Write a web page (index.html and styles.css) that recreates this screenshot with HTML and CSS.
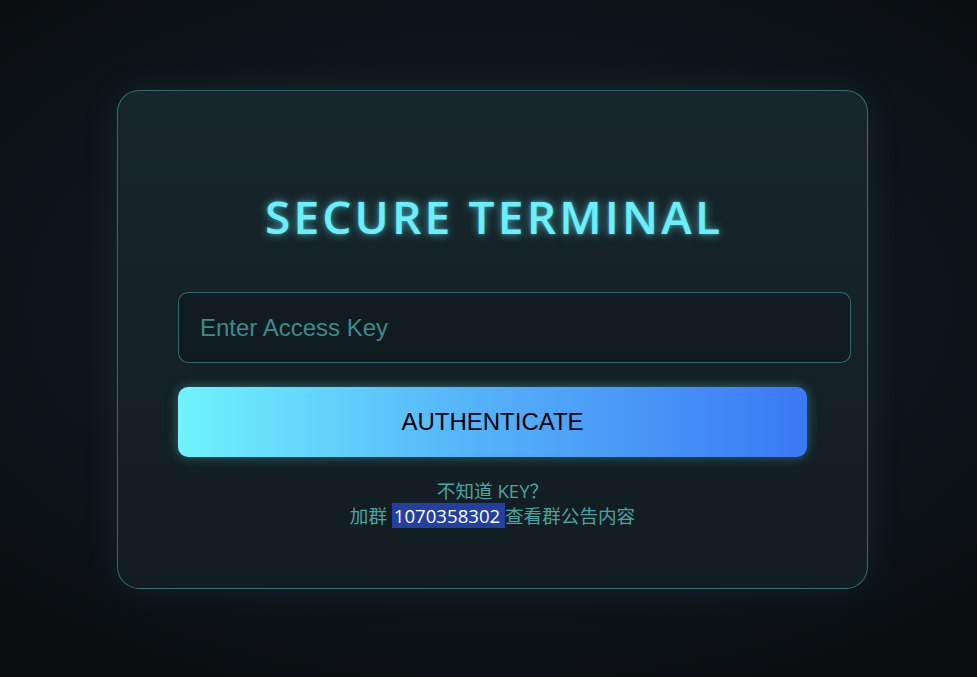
FILE: index.html
```html
<!DOCTYPE html>
<html lang="zh">
<head>
<meta charset="utf-8">
<title>Secure Terminal</title>
<link rel="stylesheet" href="styles.css">
</head>
<body>
<main class="stage">
  <section class="card">
    <h1 class="title">SECURE TERMINAL</h1>
    <input class="key-input" type="password" placeholder="Enter Access Key">
    <button class="auth-btn" type="button">AUTHENTICATE</button>
    <p class="hint">不知道 KEY？<br>加群 <span class="group-id">1070358302 </span>查看群公告内容</p>
  </section>
</main>
</body>
</html>
```

FILE: styles.css
```css
* { box-sizing: border-box; }
html, body { margin: 0; padding: 0; height: 100%; }
body {
  background: radial-gradient(ellipse 70% 60% at 50% 45%, #121c21 0%, #0e151a 60%, #0a0e11 100%),
              #0b1013;
  background-color: #0b1013;
  font-family: "Open Sans", "Noto Sans CJK SC", sans-serif;
  overflow: hidden;
}
.stage {
  min-height: 100vh;
  display: flex;
  align-items: center;
  justify-content: center;
  padding-left: 8px;
  padding-top: 2px;
}
.card {
  width: 751px;
  padding: 60px;
  border: 1px solid rgba(80, 170, 175, 0.55);
  border-radius: 22px;
  background: linear-gradient(180deg, #17262b 0%, #121d22 100%);
  box-shadow: 0 0 40px rgba(100, 243, 253, 0.09);
  text-align: center;
}
.title {
  margin: 38px 0 47px;
  font-family: "Open Sans", sans-serif;
  font-weight: 600;
  font-size: 46px;
  line-height: 1.2;
  letter-spacing: 3.2px;
  padding-left: 3px;
  color: #6ceefb;
  text-shadow: 0 0 10px rgba(100, 243, 253, 0.6), 0 0 3px rgba(100, 243, 253, 0.4);
}
.key-input {
  display: block;
  box-sizing: content-box;
  width: 100%;
  height: 27px;
  padding: 21px 21px;
  margin: 0;
  border: 1px solid rgba(80, 170, 175, 0.55);
  border-radius: 10px;
  background: rgba(8, 18, 22, 0.35);
  font-family: "Liberation Sans", Arial, sans-serif;
  font-size: 24px;
  line-height: 27px;
  color: #6ceefb;
  outline: none;
}
.key-input::placeholder { color: #3e8a8a; }
.auth-btn {
  display: block;
  width: 100%;
  height: 70px;
  margin: 24px 0 0;
  padding: 0;
  border: none;
  border-radius: 10px;
  background: linear-gradient(90deg, #70f3fd 0%, #56b5f9 45%, #3b78f5 100%);
  box-shadow: 0 0 12px rgba(100, 243, 253, 0.35);
  font-family: "Liberation Sans", Arial, sans-serif;
  font-size: 24px;
  color: #000;
  cursor: pointer;
}
.hint {
  margin: 21px 0 0;
  font-size: 18.6px;
  line-height: 25px;
  color: #4ea3a3;
}
.group-id {
  background: #233f9f;
  color: #ffffff;
  padding-left: 2px;
}
```
